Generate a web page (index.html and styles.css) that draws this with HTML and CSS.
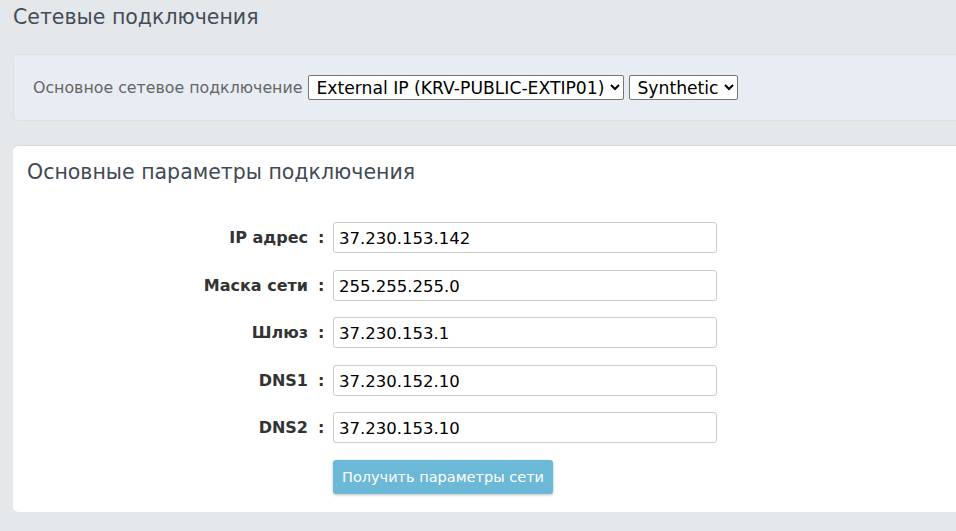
FILE: index.html
```html
<!DOCTYPE html>
<html lang="ru">
<head>
    <meta charset="UTF-8">
    <meta name="viewport" content="width=device-width, initial-scale=1.0">
    <link rel="stylesheet" href="styles.css">
    <title>Сетевые подключения</title>
</head>
<body>
  <div class="page">
    <h1 class="pageTitle">Сетевые подключения</h1>

    <div class="toolbar">
      <span class="toolbarLabel">Основное сетевое подключение</span>
      <select class="pick">
        <option>External IP (KRV-PUBLIC-EXTIP01)</option>
      </select>
      <select class="pick">
        <option>Synthetic</option>
      </select>
    </div>

    <div class="card">
      <h2 class="cardTitle">Основные параметры подключения</h2>
      <div class="netForm">
        <label class="fieldLabel">IP адрес</label><span class="colon">:</span>
        <input type="text" class="field" value="37.230.153.142">

        <label class="fieldLabel">Маска сети</label><span class="colon">:</span>
        <input type="text" class="field" value="255.255.255.0">

        <label class="fieldLabel">Шлюз</label><span class="colon">:</span>
        <input type="text" class="field" value="37.230.153.1">

        <label class="fieldLabel">DNS1</label><span class="colon">:</span>
        <input type="text" class="field" value="37.230.152.10">

        <label class="fieldLabel">DNS2</label><span class="colon">:</span>
        <input type="text" class="field" value="37.230.153.10">

        <span></span><span></span>
        <div><button class="btnInfo">Получить параметры сети</button></div>
      </div>
    </div>
  </div>
</body>
</html>
```

FILE: styles.css
```css
body {
  margin: 0;
  background-color: #e4e8eb;
  font-family: "DejaVu Sans", Verdana, sans-serif;
  color: #333;
}

.page {
  padding: 0 0 0 13px;
}

.pageTitle {
  margin: 0;
  padding-top: 5px;
  height: 49px;
  font-size: 20.5px;
  font-weight: normal;
  color: #444d56;
}

.toolbar {
  display: flex;
  align-items: center;
  height: 65px;
  padding-left: 19px;
  background-color: #e8ecf3;
  border: 1px solid #dcdfe3;
  border-right: none;
  border-radius: 5px 0 0 5px;
  margin-bottom: 24px;
}

.toolbarLabel {
  font-size: 15.8px;
  color: #666;
  margin-right: 6px;
}

.pick {
  font-family: "DejaVu Sans", Verdana, sans-serif;
  font-size: 17.2px;
  color: #000;
  height: 25px;
  margin-right: 5px;
  padding: 0 2px 0 3px;
  background: #fff;
  border: 1px solid #767676;
  border-radius: 2px;
}

.card {
  background: #fff;
  border-top: 1px solid #d5d9dc;
  border-radius: 6px 0 0 6px;
  padding: 14px 14px 17px;
  height: 335px;
}

.cardTitle {
  margin: 0 0 38px;
  font-size: 20.5px;
  font-weight: normal;
  color: #3f4a54;
}

.netForm {
  display: grid;
  grid-template-columns: 281px 25px 384px;
  row-gap: 16.5px;
  align-items: center;
}

.fieldLabel {
  text-align: right;
  font-size: 16px;
  font-weight: bold;
  color: #333;
}

.colon {
  font-weight: bold;
  font-size: 16px;
  padding-left: 10px;
}

.field {
  height: 31px;
  box-sizing: border-box;
  border: 1px solid #ccc;
  border-radius: 3px;
  padding: 2px 5px 0;
  font-family: "DejaVu Sans", Verdana, sans-serif;
  font-size: 16.5px;
  color: #000;
}

.btnInfo {
  margin-top: 0;
  height: 34px;
  padding: 0 9px;
  border: none;
  border-radius: 3px;
  background-color: #6bb9d6;
  color: #fff;
  font-family: "DejaVu Sans", Verdana, sans-serif;
  font-size: 14.5px;
  box-shadow: 0 1px 3px rgba(0, 0, 0, 0.25);
}
```
